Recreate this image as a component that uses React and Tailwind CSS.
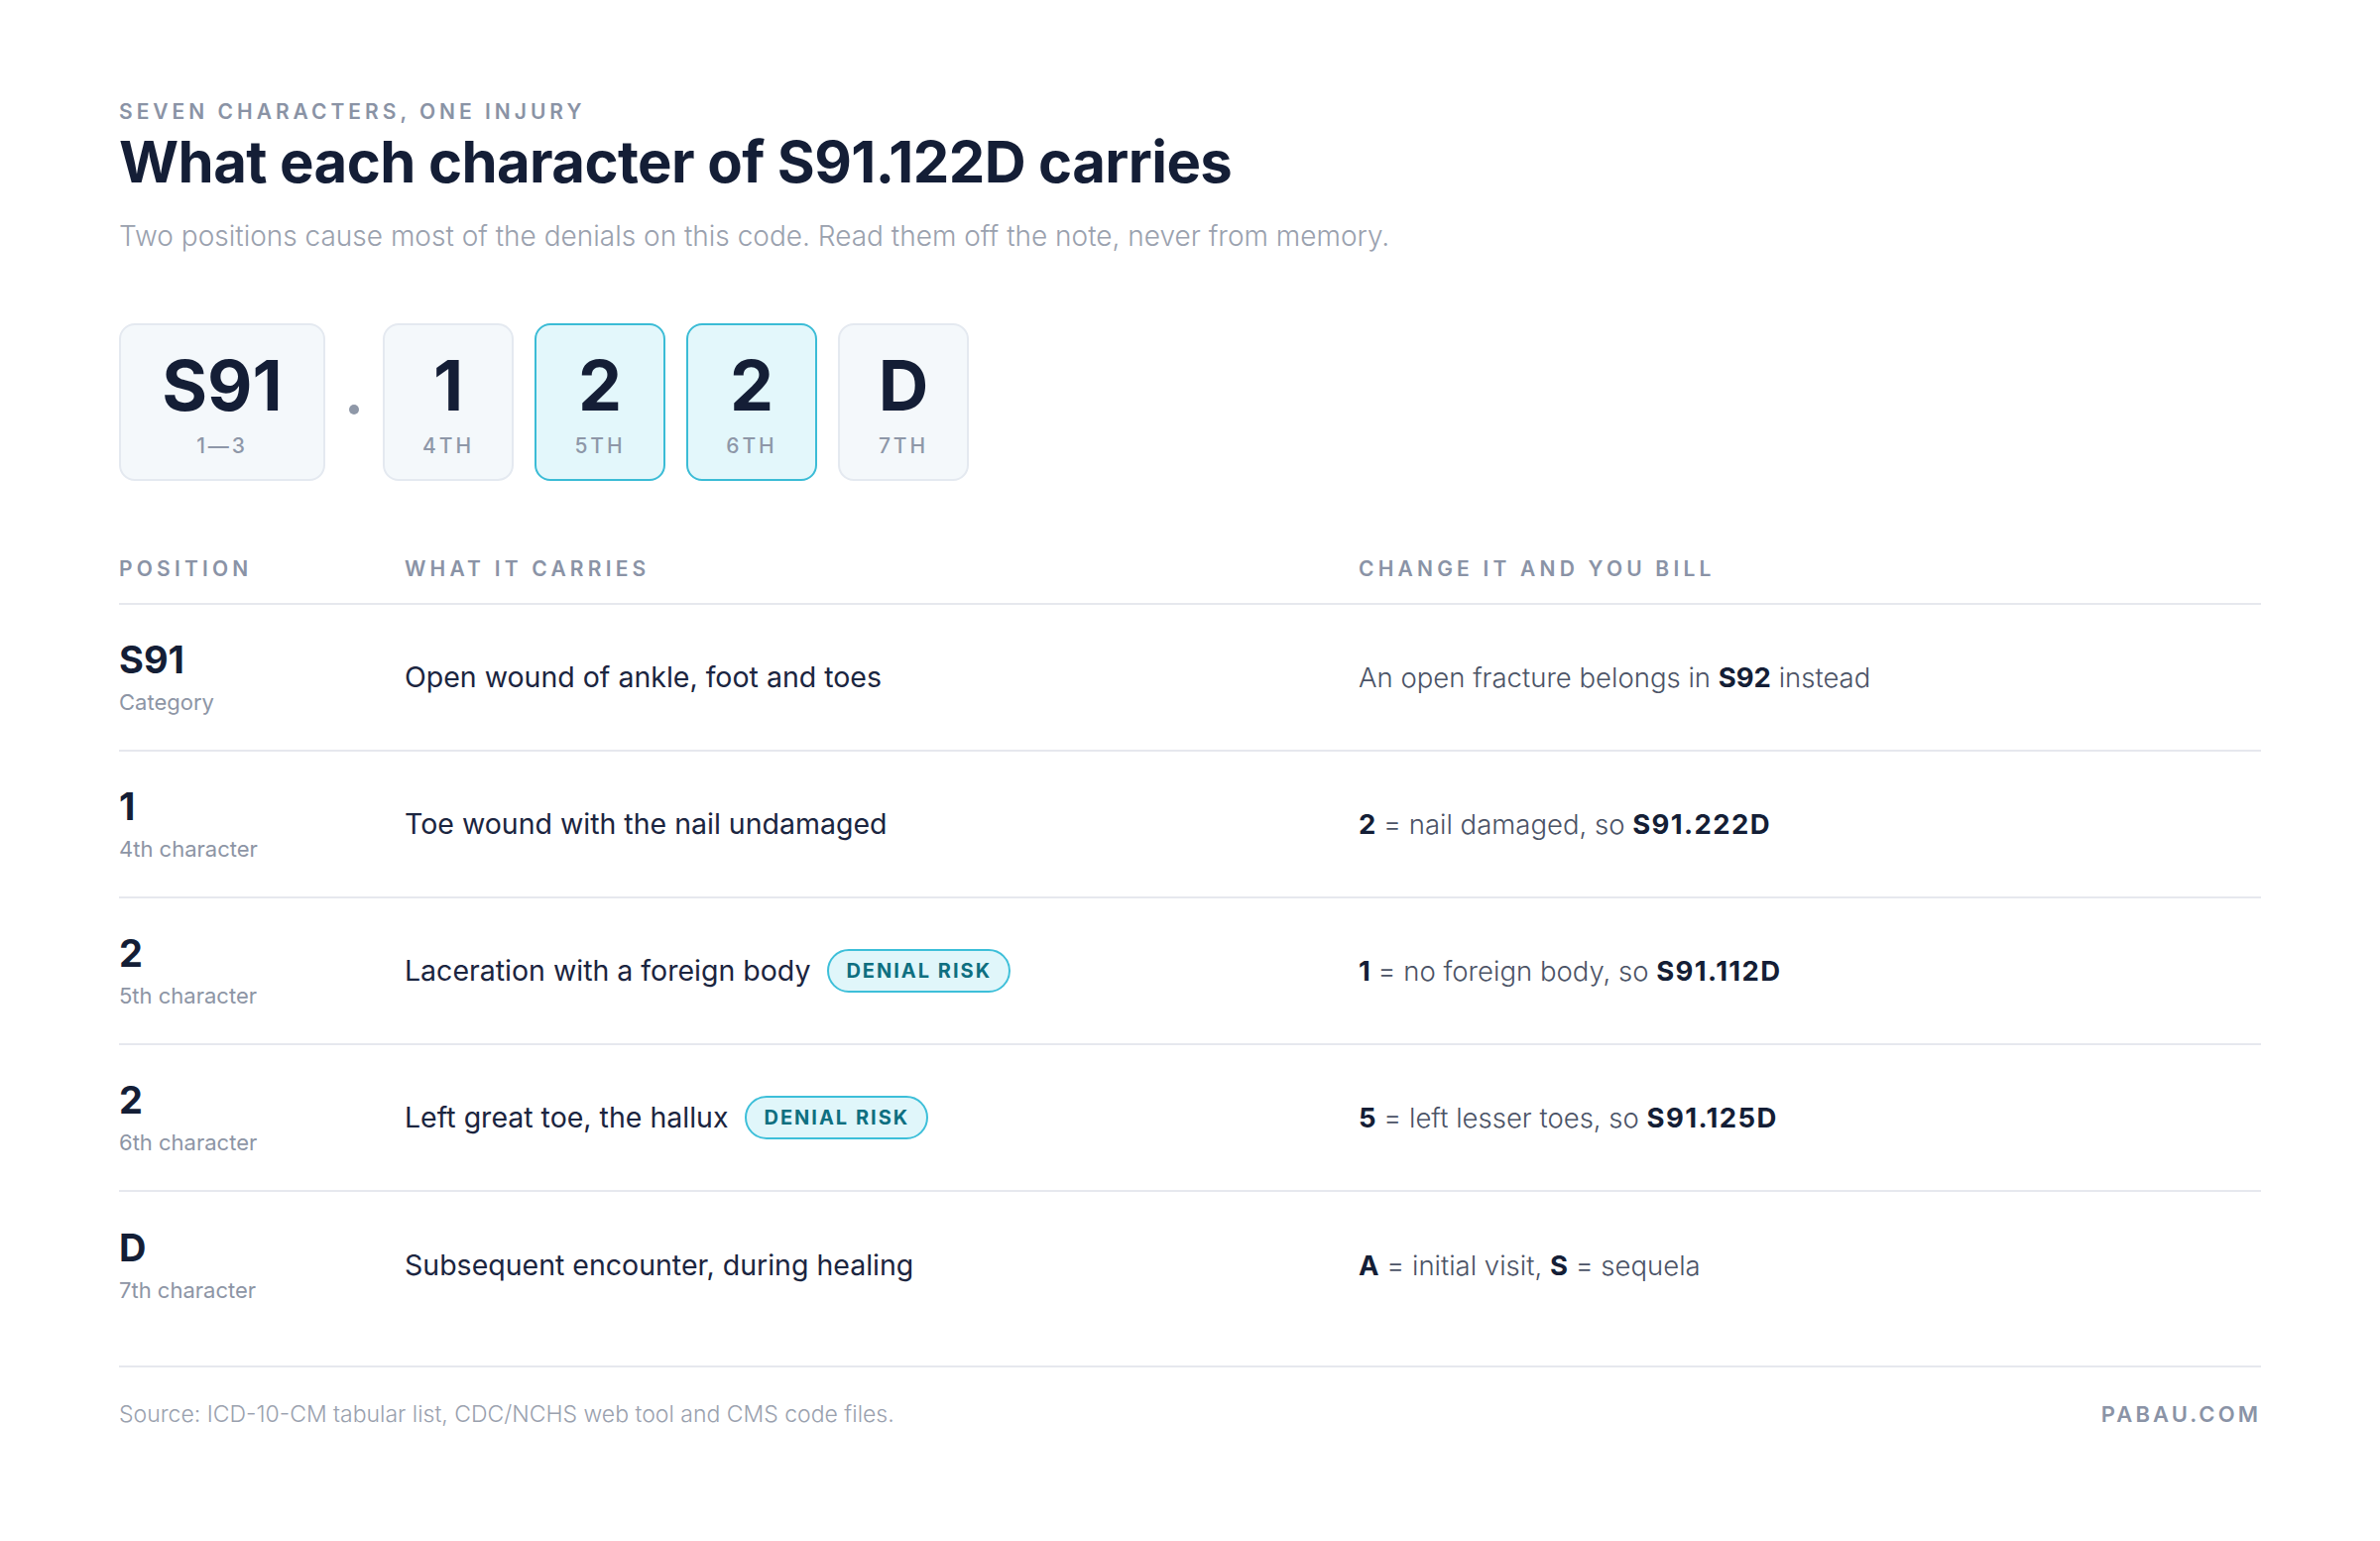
import React from 'react';

const boxes = [
    { value: "S91", label: "1—3", wide: true },
    { value: "1", label: "4TH" },
    { value: "2", label: "5TH", hot: true },
    { value: "2", label: "6TH", hot: true },
    { value: "D", label: "7TH" },
];

const B = ({ children }) => <b className="font-bold text-[#141e36]">{children}</b>;
const Code = ({ children }) => <b className="font-bold tracking-[0.05em] text-[#141e36]">{children}</b>;

const rows = [
    {
        pos: "S91", sub: "Category", carries: "Open wound of ankle, foot and toes",
        bill: <>An open fracture belongs in <B>S92</B> instead</>
    },
    {
        pos: "1", sub: "4th character", carries: "Toe wound with the nail undamaged",
        bill: <><B>2</B> = nail damaged, so <Code>S91.222D</Code></>
    },
    {
        pos: "2", sub: "5th character", carries: "Laceration with a foreign body", risk: true,
        bill: <><B>1</B> = no foreign body, so <Code>S91.112D</Code></>
    },
    {
        pos: "2", sub: "6th character", carries: "Left great toe, the hallux", risk: true,
        bill: <><B>5</B> = left lesser toes, so <Code>S91.125D</Code></>
    },
    {
        pos: "D", sub: "7th character", carries: "Subsequent encounter, during healing",
        bill: <><B>A</B> = initial visit, <B>S</B> = sequela</>
    },
];

function CharBox({ box }) {
    return (
        <div className={`flex flex-col items-center pt-[25px] pb-[21px] rounded-2xl border-2 ${box.wide ? "w-[208px]" : "w-[132px]"} ${box.hot ? "border-[#3bbcd6] bg-[#e3f7fb]" : "border-[#e4e9f0] bg-[#f4f8fb]"}`}>
            <div className="text-[70px] leading-[72px] font-bold text-[#141e36]">{box.value}</div>
            <div className="mt-[13px] text-[21px] leading-[24px] font-medium tracking-[0.14em] text-[#8e97a8]">{box.label}</div>
        </div>
    );
}

export default function App() {
    return (
        <div className="min-h-[1554px] w-[2400px] bg-white px-[120px] pt-[101px] font-['Inter','Lato',sans-serif] text-[#141e36]">
            <div className="text-[21px] leading-[24px] font-semibold tracking-[0.19em] text-[#8a93a5]">SEVEN CHARACTERS, ONE INJURY</div>
            <h1 className="mt-[6px] text-[58px] leading-[64px] font-bold tracking-[-0.01em] text-[#141e36]">What each character of S91.122D carries</h1>
            <p className="mt-[25px] text-[28px] leading-[36px] font-light text-[#9aa1ae]">Two positions cause most of the denials on this code. Read them off the note, never from memory.</p>

            <div className="mt-[70px] flex items-center">
                <CharBox box={boxes[0]} />
                <div className="mx-[24px] mt-[14px] w-[10px] h-[10px] rounded-full bg-[#8f98a8]" />
                <div className="flex gap-[21px]">
                    {boxes.slice(1).map((b, i) => <CharBox key={i} box={b} />)}
                </div>
            </div>

            <div className="mt-[77px] grid grid-cols-[288px_962px_1fr] pb-[22px] border-b-2 border-[#e6e8ee] text-[21px] leading-[24px] font-semibold tracking-[0.2em] text-[#8a93a6]">
                <div>POSITION</div>
                <div>WHAT IT CARRIES</div>
                <div>CHANGE IT AND YOU BILL</div>
            </div>

            {rows.map((r, i) => (
                <div key={i} className={`grid grid-cols-[288px_962px_1fr] items-center h-[148px] ${i < rows.length - 1 ? "border-b-2 border-[#e6e8ee]" : ""}`}>
                    <div className="flex flex-col gap-[8px]">
                        <div className="text-[38px] leading-[42px] font-bold text-[#141e36]">{r.pos}</div>
                        <div className="text-[22px] leading-[28px] text-[#8d95a5]">{r.sub}</div>
                    </div>
                    <div className="flex items-center gap-[17px] text-[28.5px] leading-[36px] text-[#1b2540]">
                        <span>{r.carries}</span>
                        {r.risk && (
                            <span className="px-[17px] h-[44px] flex items-center rounded-full border-2 border-[#3dbfd9] bg-[#e0f6fa] text-[20px] font-bold tracking-[0.1em] text-[#0e6f80]">DENIAL RISK</span>
                        )}
                    </div>
                    <div className="text-[27.5px] leading-[36px] font-light text-[#4b5366]">{r.bill}</div>
                </div>
            ))}

            <div className="mt-[27px] border-t-2 border-[#e6e8ee] pt-[33px] flex justify-between items-center">
                <div className="text-[23px] leading-[28px] font-light text-[#9aa1ae]">Source: ICD-10-CM tabular list, CDC/NCHS web tool and CMS code files.</div>
                <div className="text-[22px] leading-[28px] font-semibold tracking-[0.14em] text-[#8a93a6]">PABAU.COM</div>
            </div>
        </div>
    );
}
